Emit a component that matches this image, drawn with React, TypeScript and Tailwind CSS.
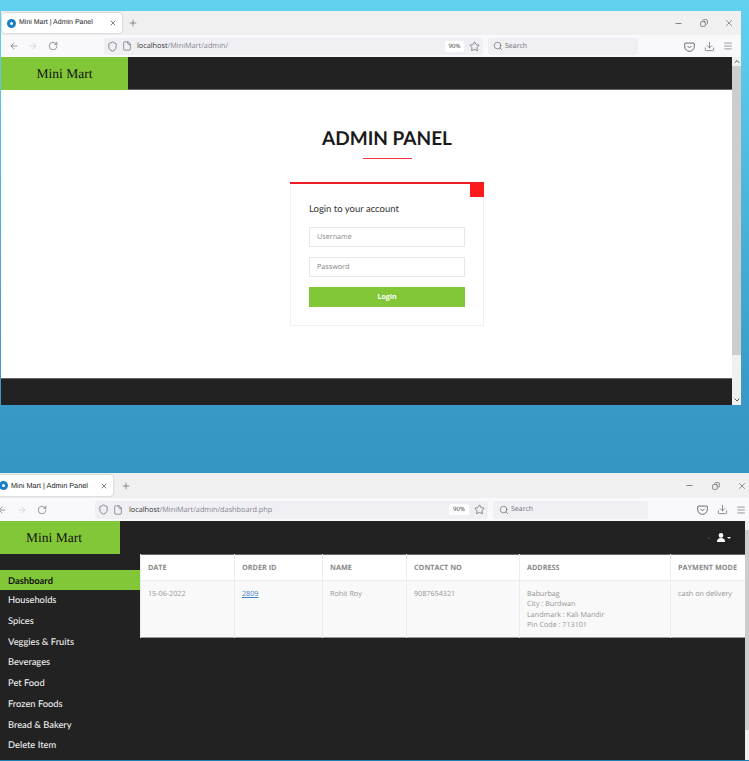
import { ArrowLeft, ArrowRight, ChevronDown, ChevronUp, Copy, Download, File, Menu, Minus, Plus, RotateCw, Search, Shield, Star, X } from "lucide-react";

const UI = "font-['Open_Sans',sans-serif]";
const HEAD = "font-['Lato',sans-serif]";
const BROWSER = "font-['Liberation_Sans',sans-serif]";

const categories = ["Households", "Spices", "Veggies & Fruits", "Beverages", "Pet Food", "Frozen Foods", "Bread & Bakery", "Delete Item"];

function Favicon() {
  return (
    <span className="flex h-[9px] w-[9px] shrink-0 items-center justify-center rounded-full bg-[#1a7fc4]">
      <span className="h-[3px] w-[3px] rounded-full bg-white" />
    </span>
  );
}

function Pocket() {
  return (
    <svg width="11" height="11" viewBox="0 0 16 16" fill="none" stroke="#55555f" strokeWidth="1.3">
      <path d="M2 3h12a1 1 0 0 1 1 1v4a7 7 0 0 1-14 0V4a1 1 0 0 1 1-1z" />
      <path d="M5 7l3 3 3-3" />
    </svg>
  );
}

function WindowButtons() {
  return (
    <>
      <Minus size={9} strokeWidth={1.5} className="text-[#333]" />
      <Copy size={8} strokeWidth={1.6} className="-scale-x-100 text-[#333]" />
      <X size={10} strokeWidth={1.2} className="text-[#333]" />
    </>
  );
}

function LoginWindow() {
  return (
    <div className="absolute left-[1px] top-[11px] flex h-[394px] w-[740px] flex-col overflow-hidden">
      <div className="flex h-[24px] items-center bg-[#f0f0f0]">
        <div className="ml-[1px] flex h-[20px] w-[120px] items-center rounded-[3px] bg-white pl-[5px] pr-[5px] shadow-[0_0_2px_rgba(0,0,0,0.3)]">
          <Favicon />
          <span className={`ml-[3px] flex-1 whitespace-nowrap pt-[1px] text-[7px] text-[#222] ${BROWSER}`}>Mini Mart | Admin Panel</span>
          <X size={8} className="text-[#444]" />
        </div>
        <Plus size={10} strokeWidth={1.5} className="ml-[6px] text-[#555]" />
        <div className="ml-auto mr-[7px] flex w-[60px] items-center justify-between">
          <WindowButtons />
        </div>
      </div>
      <div className="flex h-[22px] items-center bg-[#f9f9fb] text-[#5b5b66]">
        <div className="flex w-[103px] items-center gap-[9px] pl-[8px]">
          <ArrowLeft size={10} strokeWidth={1.5} />
          <ArrowRight size={10} strokeWidth={1.5} className="text-[#c4c4c8]" />
          <RotateCw size={10} strokeWidth={1.5} className="ml-[1px]" />
        </div>
        <div className="flex h-[17px] w-[379px] items-center rounded-[3px] bg-[#f0f0f4] pl-[3px] pr-[3px]">
          <Shield size={11} strokeWidth={1.5} />
          <File size={10} strokeWidth={1.5} className="ml-[4px]" />
          <span className={`ml-[5px] flex-1 pt-[1px] text-[7.3px] text-[#85858f] ${UI}`}>
            <span className="text-[#333]">localhost</span>/MiniMart/admin/
          </span>
          <span className={`flex h-[11px] w-[19px] items-center justify-center rounded-[2px] bg-white text-[6px] text-[#333] ${UI}`}>90%</span>
          <Star size={11} strokeWidth={1.5} className="ml-[5px]" />
        </div>
        <div className="ml-[5px] flex h-[17px] w-[150px] items-center rounded-[3px] bg-[#f0f0f4] pl-[5px]">
          <Search size={10} strokeWidth={1.5} />
          <span className={`ml-[2px] pt-[2px] text-[7px] text-[#70707a] ${UI}`}>Search</span>
        </div>
        <div className="ml-auto mr-[8px] flex w-[49px] items-center justify-between">
          <Pocket />
          <Download size={11} strokeWidth={1.5} />
          <Menu size={10} strokeWidth={1.5} />
        </div>
      </div>
      <div className="flex min-h-0 flex-1">
        <div className="flex w-[731px] flex-col bg-white">
          <div className="flex h-[33px] shrink-0 border-b border-[#666] bg-[#222]">
            <div className="-mb-[1px] flex w-[127px] items-center justify-center bg-[#82c737] pt-[2px] font-['Liberation_Serif',serif] text-[13.5px] text-[#111]">Mini Mart</div>
          </div>
          <div className="flex flex-1 flex-col">
            <div className="ml-[289px] flex w-[194px] flex-col items-center pt-[36px]">
              <h1 className={`text-[19px] font-bold leading-[26px] text-[#1a1a1a] ${HEAD}`}>ADMIN PANEL</h1>
              <div className="mt-[6px] h-[1px] w-[49px] bg-[#f5333f]" />
              <div className="relative mt-[23px] h-[144px] w-full border border-t-0 border-[#efefef] px-[18px]">
                <div className="absolute -left-[1px] -right-[1px] top-0 h-[2px] bg-[#ee1c25]" />
                <div className="absolute -right-[1px] top-[1px] h-[14px] w-[14px] bg-[#fb1a1c]" />
                <p className={`pt-[21px] text-[9.5px] leading-[14px] text-[#333] ${HEAD}`}>Login to your account</p>
                <div className={`mt-[10px] flex h-[20px] items-center border border-[#e6e6e6] pl-[7px] pt-[1px] text-[7.2px] text-[#8a8a8a] ${UI}`}>Username</div>
                <div className={`mt-[10px] flex h-[20px] items-center border border-[#e6e6e6] pl-[7px] pt-[1px] text-[7.2px] text-[#808080] ${UI}`}>Password</div>
                <button className={`mt-[10px] h-[20px] w-full bg-[#82c737] text-[7px] font-bold text-white ${UI}`}>Login</button>
              </div>
            </div>
          </div>
          <div className="h-[27px] shrink-0 border-t border-[#666] bg-[#222]" />
        </div>
        <div className="flex w-[9px] flex-col items-center bg-[#f0f0f0]">
          <ChevronUp size={8} strokeWidth={3} className="h-[9px] text-[#555]" />
          <div className="h-[289px] w-full bg-[#cdcdcd]" />
          <ChevronDown size={8} strokeWidth={3} className="mt-auto h-[10px] text-[#555]" />
        </div>
      </div>
    </div>
  );
}

const th = `border-l border-[#ececec] pl-[7px] pt-[1px] text-left align-middle text-[7.25px] font-bold text-[#8a8a8a] ${UI}`;
const td = `border-l border-[#ececec] pl-[7px] pt-[8px] align-top text-[7.2px] leading-[10.4px] text-[#949494] ${UI}`;

function DashboardWindow() {
  return (
    <div className="absolute left-0 top-[473px] flex h-[287px] w-[749px] flex-col overflow-hidden">
      <div className="flex h-[25px] shrink-0 items-center bg-[#f0f0f0]">
        <div className="-ml-[6px] flex h-[21px] w-[119px] items-center rounded-[3px] bg-white pl-[5px] pr-[5px] shadow-[0_0_2px_rgba(0,0,0,0.3)]">
          <Favicon />
          <span className={`ml-[3px] flex-1 whitespace-nowrap pt-[1px] text-[7.3px] text-[#222] ${BROWSER}`}>Mini Mart | Admin Panel</span>
          <X size={8} className="text-[#444]" />
        </div>
        <Plus size={10} strokeWidth={1.5} className="ml-[8px] text-[#555]" />
        <div className="ml-auto mr-[2px] flex w-[62px] items-center justify-between">
          <WindowButtons />
        </div>
      </div>
      <div className="flex h-[23px] shrink-0 items-center bg-[#f9f9fb] text-[#5b5b66]">
        <div className="-ml-[3px] flex w-[95px] items-center gap-[10px]">
          <ArrowLeft size={10} strokeWidth={1.5} />
          <ArrowRight size={10} strokeWidth={1.5} className="text-[#c4c4c8]" />
          <RotateCw size={10} strokeWidth={1.5} />
        </div>
        <div className="ml-[3px] flex h-[18px] w-[393px] items-center rounded-[3px] bg-[#f0f0f4] pl-[3px] pr-[3px]">
          <Shield size={11} strokeWidth={1.5} />
          <File size={10} strokeWidth={1.5} className="ml-[4px]" />
          <span className={`ml-[6px] flex-1 pt-[1px] text-[7.3px] text-[#85858f] ${UI}`}>
            <span className="text-[#333]">localhost</span>/MiniMart/admin/dashboard.php
          </span>
          <span className={`flex h-[11px] w-[20px] items-center justify-center rounded-[2px] bg-white text-[6px] text-[#333] ${UI}`}>90%</span>
          <Star size={11} strokeWidth={1.5} className="ml-[5px]" />
        </div>
        <div className="ml-[5px] flex h-[18px] w-[155px] items-center rounded-[3px] bg-[#f0f0f4] pl-[6px]">
          <Search size={10} strokeWidth={1.5} />
          <span className={`ml-[2px] pt-[2px] text-[7px] text-[#70707a] ${UI}`}>Search</span>
        </div>
        <div className="ml-auto mr-[3px] flex w-[49px] items-center justify-between">
          <Pocket />
          <Download size={11} strokeWidth={1.5} />
          <Menu size={10} strokeWidth={1.5} />
        </div>
      </div>
      <div className="flex min-h-0 flex-1 bg-[#222]">
        <div className="flex w-[745px] flex-col">
          <div className="flex h-[33px] shrink-0 items-center">
            <div className="flex h-full w-[120px] items-center justify-center bg-[#82c737] pr-[12px] pt-[1px] font-['Liberation_Serif',serif] text-[13.5px] text-[#111]">Mini Mart</div>
            <div className="ml-auto mr-[14px] flex items-center">
              <span className="mr-[6px] h-[2px] w-[2px] rounded-full bg-[#444]" />
              <svg width="10" height="9" viewBox="0 0 10 9" fill="#fff">
                <circle cx="5" cy="2.4" r="2.3" />
                <path d="M1 9c0-3 1.500-4 4-4s4 1 4 4z" />
              </svg>
              <span className="ml-[1px] h-0 w-0 border-x-[2px] border-t-[2px] border-x-transparent border-t-white" />
            </div>
          </div>
          <div className="flex min-h-0 flex-1">
            <nav className={`w-[140px] shrink-0 pt-[16px] text-[9.3px] font-medium text-[#eeeeee] ${HEAD}`}>
              <div className="flex h-[20px] items-center bg-[#82c737] pl-[8px] pt-[2px] font-bold text-[#111]">Dashboard</div>
              {categories.map((c) => (
                <div key={c} className="flex h-[20.7px] items-center pl-[8px]">{c}</div>
              ))}
            </nav>
            <table className="h-[83px] w-[605px] table-fixed self-start border-t border-[#666]">
              <colgroup>
                <col className="w-[94px]" />
                <col className="w-[88px]" />
                <col className="w-[84px]" />
                <col className="w-[113px]" />
                <col className="w-[151px]" />
                <col className="w-[75px]" />
              </colgroup>
              <thead>
                <tr className="h-[26px] border-b border-[#ececec] bg-white">
                  <th className={th}>DATE</th>
                  <th className={th}>ORDER ID</th>
                  <th className={th}>NAME</th>
                  <th className={th}>CONTACT NO</th>
                  <th className={th}>ADDRESS</th>
                  <th className={th}>PAYMENT MODE</th>
                </tr>
              </thead>
              <tbody>
                <tr className="h-[57px] border-b border-[#999] bg-[#f9f9f9]">
                  <td className={td}>15-06-2022</td>
                  <td className={td}><a className="text-[#3f82c8] underline">2809</a></td>
                  <td className={td}>Rohit Roy</td>
                  <td className={td}>9087654321</td>
                  <td className={td}>
                    Baburbag<br />City : Burdwan<br />Landmark : Kali Mandir<br />Pin Code : 713101
                  </td>
                  <td className={td}>cash on delivery</td>
                </tr>
              </tbody>
            </table>
          </div>
        </div>
        <div className="w-[4px] bg-[#f0f0f0]">
          <div className="mt-[9px] h-[200px] bg-[#cdcdcd]" />
        </div>
      </div>
    </div>
  );
}

export default function App() {
  return (
    <div className="relative h-[761px] w-[749px] overflow-hidden bg-gradient-to-b from-[#62d2f0] via-[#3a9bc8] to-[#1f7fb0] [text-rendering:geometricPrecision]">
      <LoginWindow />
      <DashboardWindow />
    </div>
  );
}
